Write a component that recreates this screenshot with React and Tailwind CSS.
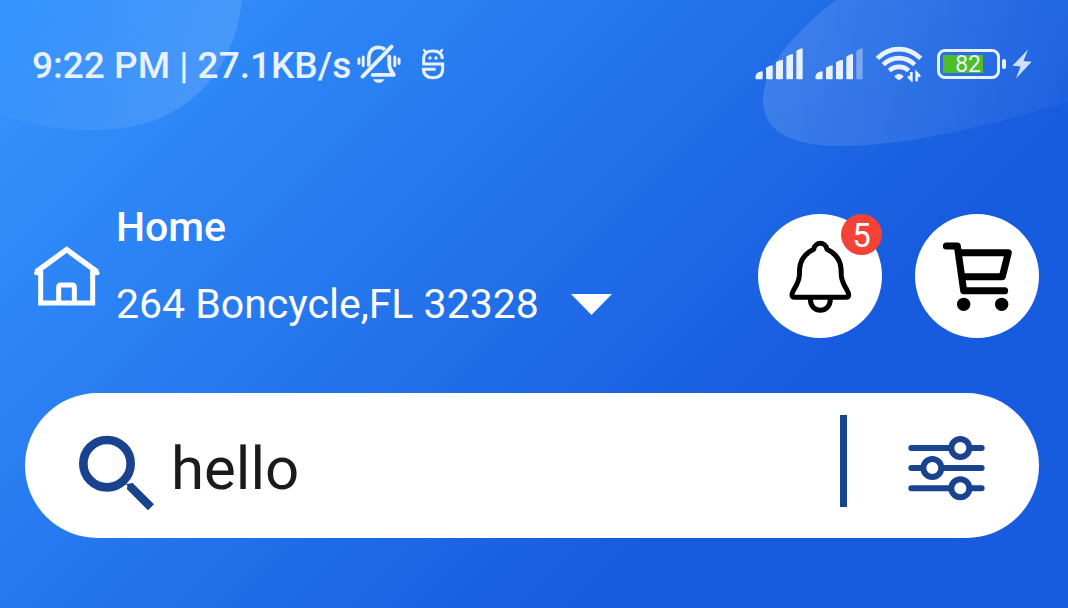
import { useState } from "react";

function Backdrop() {
  return (
    <div aria-hidden="true" className="pointer-events-none absolute inset-0 overflow-hidden">
      <svg className="absolute left-0 top-0" width="246" height="132" viewBox="0 0 246 132">
        <defs>
          <linearGradient id="blobLeft" x1="0" y1="0.3" x2="1" y2="0.6">
            <stop offset="0" stopColor="#fff" stopOpacity="0" />
            <stop offset="1" stopColor="#fff" stopOpacity="0.14" />
          </linearGradient>
        </defs>
        <path d="M0 0H242C234 75 183 130 95 130C58 130 25 124 0 114Z" fill="url(#blobLeft)" />
      </svg>
      <svg className="absolute right-0 top-0" width="306" height="148" viewBox="762 0 306 148">
        <defs>
          <linearGradient id="blobRight" x1="0" y1="0.5" x2="1" y2="0.5">
            <stop offset="0" stopColor="#fff" stopOpacity="0.13" />
            <stop offset="1" stopColor="#fff" stopOpacity="0.03" />
          </linearGradient>
        </defs>
        <path d="M836 0C790 35 763 70 763 100C763 130 788 146 840 146C915 146 1000 122 1068 102V0Z" fill="url(#blobRight)" />
      </svg>
    </div>
  );
}

function MutedBellIcon() {
  return (
    <svg width="44" height="40" viewBox="50 40 135 121" fill="none" stroke="currentColor" strokeWidth="9">
      <path d="M56 85V99M69 79V106M166 79V106M179 85V99" strokeWidth="9" strokeLinecap="round" />
      <path d="M86 108V82C87 62 98 50 116 49C124 49 131 52 136 56" strokeWidth="11" />
      <path d="M67 139L156 47" strokeWidth="12" strokeLinecap="round" />
      <path d="M149 78V105C150 117 157 124 163 134H98" strokeWidth="12" strokeLinecap="round" strokeLinejoin="round" />
      <path d="M99 147H134C130 155 124 158 117 158C109 158 103 155 99 147Z" fill="currentColor" stroke="none" />
    </svg>
  );
}

function RobotIcon() {
  return (
    <svg width="24" height="32" viewBox="246 51 72 96" fill="none" stroke="currentColor" strokeWidth="9">
      <path d="M254 98V82C254 67 265 60 282 60C299 60 310 67 310 84" />
      <path d="M255 57L262 66M309 57L302 66" strokeWidth="7" strokeLinecap="round" />
      <path d="M250 99H311V113C311 131 300 140 282 140C264 140 254 131 253 115H290" />
      <circle cx="273" cy="81" r="5" fill="currentColor" stroke="none" />
      <circle cx="291" cy="81" r="5" fill="currentColor" stroke="none" />
    </svg>
  );
}

function SignalIcon({ weak }) {
  return (
    <svg width="48" height="32" viewBox="45 53 144 96" fill="currentColor">
      <path d="M46 143C46 130 55 124 68 123V143Q68 147 64 147H50Q46 147 46 143Z" />
      <path d="M78 112Q88 106 98 105V144Q98 147 95 147H81Q78 147 78 144Z" />
      <path d="M108 96Q118 89 129 88V144Q129 147 126 147H111Q108 147 108 144Z" />
      <path d="M139 79Q148 72 159 71V144Q159 147 156 147H142Q139 147 139 144Z" />
      <path d="M169 62Q178 55 188 54V144Q188 147 185 147H172Q169 147 169 144Z" opacity={weak ? 0.4 : 1} />
    </svg>
  );
}

function WifiIcon() {
  return (
    <svg width="48" height="36" viewBox="405 48 144 108" fill="none" stroke="currentColor" strokeWidth="14">
      <path d="M412 85C449 48 505 48 542 85" />
      <path d="M430 104C457 78 497 78 524 104" />
      <path d="M448 122C464 107 490 107 506 122" />
      <path d="M463 139Q477 124 491 139Q488 146 477 151Q466 146 463 139Z" fill="currentColor" stroke="none" />
      <path d="M514 126V149L504 139M530 154V129L540 140" strokeWidth="8" />
    </svg>
  );
}

function Battery() {
  return (
    <div className="flex items-center gap-0.5">
      <div className="flex h-[30px] w-[63px] rounded-lg border-3 border-[#e8f1ff] p-[3px]">
        <div className="flex w-10 items-center justify-end bg-[#4fbe26] pr-0.5 text-[23px] leading-none">
          82
        </div>
      </div>
      <div className="h-2.5 w-1 rounded-full bg-[#e8f1ff]" />
    </div>
  );
}

function BoltIcon() {
  return (
    <svg width="20" height="30" viewBox="817 55 61 91" fill="#cfe0ff">
      <path d="M866 56L818 106L843 108L829 145L877 94L852 91Z" />
    </svg>
  );
}

function HouseIcon() {
  return (
    <svg width="67" height="61" viewBox="38 136 201 183" fill="none" stroke="#fff" strokeWidth="15">
      <path d="M47 214L139 147L231 214" strokeWidth="16" />
      <path d="M48 217H62M217 217H231" strokeWidth="14" strokeLinecap="round" />
      <path d="M61 208V307H217V208" />
      <path d="M115 305V260Q115 253 122 253H155Q162 253 162 260V305" />
    </svg>
  );
}

function BellIcon() {
  return (
    <svg width="65" height="75" viewBox="114 100 195 225" fill="none" stroke="#000" strokeWidth="15" strokeLinejoin="round">
      <path d="M191 131C195 107 227 107 231 131C255 143 271 159 273 188L274 210C276 238 296 254 296 268Q296 275 288 275H134Q126 275 126 268C126 254 146 238 148 210L149 188C151 159 167 143 191 131Z" />
      <path d="M181 280C181 325 241 325 241 280" />
    </svg>
  );
}

function CartIcon() {
  return (
    <svg width="71" height="71" viewBox="110 106 213 213" fill="none" stroke="#000" strokeWidth="21" strokeLinecap="round" strokeLinejoin="round">
      <path d="M123 121H156L175 255H298" />
      <path d="M160 141H309L291 213H172" />
      <circle cx="175" cy="296" r="20" fill="#000" stroke="none" />
      <circle cx="289" cy="296" r="20" fill="#000" stroke="none" />
    </svg>
  );
}

function SearchIcon() {
  return (
    <svg width="77" height="77" viewBox="174 150 231 231" fill="#1a438f">
      <circle cx="261" cy="236" r="71" fill="none" stroke="#1a438f" strokeWidth="26" />
      <path d="M312 290L320 297L338 294L402 358L384 376L321 313L322 300L310 296Z" />
    </svg>
  );
}

function SlidersIcon() {
  return (
    <svg width="77" height="66" viewBox="263 150 231 198" fill="#fff" stroke="#1a438f" strokeWidth="18" strokeLinecap="round">
      <path d="M273 189H484M273 249H484M273 310H484" />
      <circle cx="420" cy="189" r="27" />
      <circle cx="336" cy="249" r="27" />
      <circle cx="420" cy="310" r="27" />
    </svg>
  );
}

export default function App() {
  const [query, setQuery] = useState("hello");
  return (
    <div className="relative min-h-screen bg-[linear-gradient(135deg,#3696ff_0%,#175bde_71%)] pb-8 font-[Roboto,sans-serif] text-white">
      <Backdrop />
      <div className="relative">
        <div className="flex items-center justify-between pt-10 pr-9 pl-8 text-[#e8f1ff]">
          <div className="flex h-12 items-center">
            <span className="pt-1 text-[37px] leading-12 font-medium whitespace-nowrap">9:22 PM | 27.1KB/s</span>
            <span className="ml-1.5"><MutedBellIcon /></span>
            <span className="ml-5"><RobotIcon /></span>
          </div>
          <div className="flex h-12 items-center">
            <SignalIcon />
            <span className="ml-3"><SignalIcon weak /></span>
            <span className="mr-3.5 ml-3"><WifiIcon /></span>
            <Battery />
            <span className="ml-1.5"><BoltIcon /></span>
          </div>
        </div>

        <header className="mt-[115px] flex items-end pr-[29px] pl-[33px]">
          <span className="pb-[31px]"><HouseIcon /></span>
          <div className="flex flex-col gap-[29px] pb-2.5 pl-4 text-[41px] leading-12">
            <span className="font-medium">Home</span>
            <button type="button" className="flex items-center gap-8 whitespace-nowrap">
              264 Boncycle,FL 32328
              <svg width="41" height="21" viewBox="0 0 41 21" fill="#fff">
                <path d="M0 0H41L20.5 21Z" />
              </svg>
            </button>
          </div>
          <div className="ml-auto flex gap-[33px]">
            <button type="button" aria-label="Notifications" className="relative flex size-[124px] items-center justify-center rounded-full bg-white">
              <BellIcon />
              <span className="absolute top-0 right-0 flex size-[41px] items-center justify-center rounded-full bg-[#f44336] pt-0.5 text-[33px] leading-none">5</span>
            </button>
            <button type="button" aria-label="Cart" className="flex size-[124px] items-center justify-center rounded-full bg-white">
              <CartIcon />
            </button>
          </div>
        </header>

        <form role="search" onSubmit={(e) => e.preventDefault()} className="mt-[55px] mr-[29px] ml-[25px] flex h-[145px] items-center rounded-full bg-white pr-[54px] pl-[53px]">
          <label htmlFor="query" aria-label="Search" className="pt-4"><SearchIcon /></label>
          <input
            id="query"
            type="text"
            value={query}
            onChange={(e) => setQuery(e.target.value)}
            className="ml-4 h-20 min-w-0 flex-1 bg-transparent pt-1.5 text-[60px] text-[#1b1b1d] outline-none"
          />
          <div className="mb-2.5 h-[92px] w-[7px] bg-[#1a438f]" />
          <button type="button" aria-label="Filters" className="ml-[61px] pt-1"><SlidersIcon /></button>
        </form>
      </div>
    </div>
  );
}
